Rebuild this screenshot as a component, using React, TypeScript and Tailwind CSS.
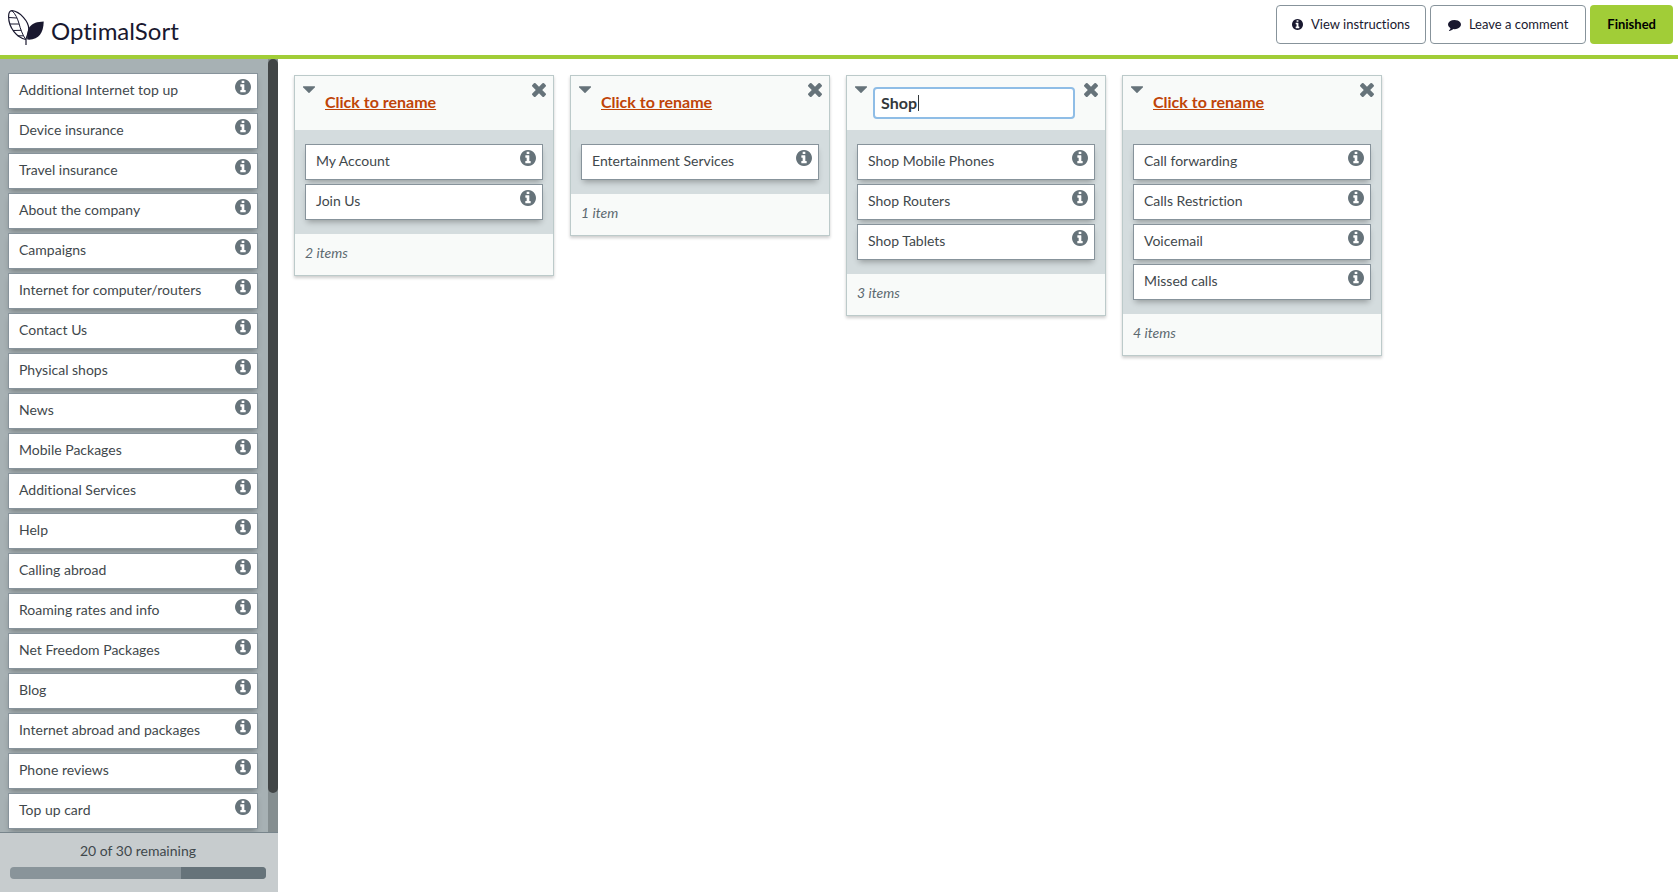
import { useState } from "react";

const REMAINING = [
  "Additional Internet top up",
  "Device insurance",
  "Travel insurance",
  "About the company",
  "Campaigns",
  "Internet for computer/routers",
  "Contact Us",
  "Physical shops",
  "News",
  "Mobile Packages",
  "Additional Services",
  "Help",
  "Calling abroad",
  "Roaming rates and info",
  "Net Freedom Packages",
  "Blog",
  "Internet abroad and packages",
  "Phone reviews",
  "Top up card",
];

const TOTAL_CARDS = 30;
const SORTED_CARDS = 10;

type Group = { id: number; name: string | null; cards: string[] };

const GROUPS: Group[] = [
  { id: 1, name: null, cards: ["My Account", "Join Us"] },
  { id: 2, name: null, cards: ["Entertainment Services"] },
  { id: 3, name: "Shop", cards: ["Shop Mobile Phones", "Shop Routers", "Shop Tablets"] },
  { id: 4, name: null, cards: ["Call forwarding", "Calls Restriction", "Voicemail", "Missed calls"] },
];

function InfoIcon({ className }: { className: string }) {
  return (
    <svg viewBox="128 128 1536 1536" fill="currentColor" aria-hidden="true" className={className}>
      <path d="M1152 1376v-160q0-14-9-23t-23-9h-96v-512q0-14-9-23t-23-9h-320q-14 0-23 9t-9 23v160q0 14 9 23t23 9h96v320h-96q-14 0-23 9t-9 23v160q0 14 9 23t23 9h448q14 0 23-9t9-23zm-128-896v-160q0-14-9-23t-23-9h-192q-14 0-23 9t-9 23v160q0 14 9 23t23 9h192q14 0 23-9t9-23zm640 416q0 209-103 385.5t-279.5 279.5-385.5 103-385.5-103-279.5-279.5-103-385.5 103-385.5 279.5-279.5 385.5-103 385.5 103 279.5 279.5 103 385.5z" />
    </svg>
  );
}

function CommentIcon({ className }: { className: string }) {
  return (
    <svg viewBox="0 128 1792 1664" fill="currentColor" aria-hidden="true" className={className}>
      <path d="M1792 896q0 174-120 321.5t-326 233-450 85.5q-70 0-145-8-198 175-460 242-49 14-114 22-17 2-30.5-9t-17.5-29v-1q-3-4-.5-12t2-10 4.5-9.5l6-9 7-8.5 8-9q7-8 31-34.5t34.5-38 31-39.5 32.5-51 27-59 26-76q-157-89-247.5-220t-90.5-281q0-130 71-248.5t191-204.5 286-136.5 348-50.5q244 0 450 85.5t326 233 120 321.5z" />
    </svg>
  );
}

function CloseIcon({ className }: { className: string }) {
  return (
    <svg viewBox="302 344 1188 1188" fill="currentColor" aria-hidden="true" className={className}>
      <path d="M1490 1300q0 40-28 68l-136 136q-28 28-68 28t-68-28l-294-294-294 294q-28 28-68 28t-68-28l-136-136q-28-28-28-68t28-68l294-294-294-294q-28-28-28-68t28-68l136-136q28-28 68-28t68 28l294 294 294-294q28-28 68-28t68 28l136 136q28 28 28 68t-28 68l-294 294 294 294q28 28 28 68z" />
    </svg>
  );
}

function CaretIcon({ className }: { className: string }) {
  return (
    <svg viewBox="384 640 1024 576" fill="currentColor" aria-hidden="true" className={className}>
      <path d="M1408 704q0 26-19 45l-448 448q-19 19-45 19t-45-19l-448-448q-19-19-19-45t19-45 45-19h896q26 0 45 19t19 45z" />
    </svg>
  );
}

function Logo() {
  return (
    <div className="flex items-start text-[#19182f]">
      <svg viewBox="0 0 36 36" fill="none" stroke="currentColor" aria-hidden="true" className="h-9 w-9">
        {/* outlined leaf */}
        <path
          d="M17.8 29.5C9 27.5 0.600 18 0.600 6.500C0.600 3 1.800 0.800 4 0.700C12 1.500 20.800 11.500 20.800 19C20.800 23 18.700 25.500 18 29.500V35"
          strokeWidth="1.200"
          strokeLinejoin="round"
        />
        {/* veins */}
        <path
          d="M4 0.700C7.500 4 9.500 8.500 11 13.500C12.500 19 14.500 25 17.800 29.500M0.800 7.500L8.800 8M2 14L11.200 14M5 20.500L13.200 20.300M9.500 25.800L15.500 25.800"
          strokeWidth="1"
        />
        {/* solid leaf */}
        <path
          d="M19.200 29.600C18.500 17.500 22.500 12 35.700 11.500C35.500 23 30.500 30.500 19.200 29.600Z"
          fill="currentColor"
          stroke="none"
        />
      </svg>
      <span className="pt-[7px] pl-[7px] text-2xl leading-7">OptimalSort</span>
    </div>
  );
}

function Card({ label }: { label: string }) {
  return (
    <li className="flex h-9 items-start justify-between border border-[#87939b] bg-white pt-1 pr-1.5 pl-2.5 text-sm leading-6 text-[#3f484c] shadow-[0_4px_6px_-2px_rgba(0,0,0,0.3)]">
      <span>{label}</span>
      <button type="button" aria-label={`About ${label}`} className="pt-px text-[#66737a]">
        <InfoIcon className="h-4 w-4" />
      </button>
    </li>
  );
}

function Sidebar() {
  const sortedShare = (SORTED_CARDS / TOTAL_CARDS) * 100;

  return (
    <aside className="flex w-[278px] shrink-0 flex-col">
      <div className="flex min-h-0 flex-1 bg-[#a7b1b4]">
        <ul className="flex min-w-0 flex-1 flex-col gap-1 overflow-hidden pt-3.5 pr-2.5 pl-2">
          {REMAINING.map((label) => (
            <Card key={label} label={label} />
          ))}
        </ul>
        {/* Scrollbar */}
        <div className="w-2.5 bg-[#858e90]">
          <div className="h-[95%] rounded-full bg-[#414546]" />
        </div>
      </div>

      <div className="border-t border-[#78858c] bg-[#c7ccce] pt-1.5 pr-3 pb-[13px] pl-2.5 text-center">
        <p className="text-sm leading-6 text-[#3f484c]">
          {TOTAL_CARDS - SORTED_CARDS} of {TOTAL_CARDS} remaining
        </p>
        <div className="mt-1 flex h-3 justify-end overflow-hidden rounded-sm bg-[#89949a]">
          <div className="bg-[#66737a]" style={{ width: `${sortedShare}%` }} />
        </div>
      </div>
    </aside>
  );
}

function GroupPanel({ group }: { group: Group }) {
  const [name, setName] = useState(group.name ?? "");
  const [typing, setTyping] = useState(false);
  const count = group.cards.length;

  return (
    <section className="w-[260px] border border-[#bccaca] bg-[#f8faf9] shadow-[0_2px_3px_rgba(0,0,0,0.2)]">
      <header className="flex h-[54px] items-start justify-between pr-[7px] pl-2">
        <button type="button" aria-label="Collapse group" className="pt-2.5 text-[#66737a]">
          <CaretIcon className="h-[7px] w-3" />
        </button>
        {group.name === null ? (
          <div className="flex-1 pt-3.5 pl-2.5">
            <a href="#rename" className="text-base leading-6 font-bold text-[#bf4408] underline">
              Click to rename
            </a>
          </div>
        ) : (
          <div className="relative mt-[11px] mr-[9px] ml-1.5 flex-1">
            <input
              aria-label="Group name"
              value={name}
              onFocus={() => setTyping(true)}
              onChange={(e) => setName(e.target.value)}
              className="block h-8 w-full rounded-sm border-2 border-[#8fbde6] bg-white px-1.5 pb-0.5 text-base leading-6 font-bold text-[#33383b] outline-none"
            />
            {/* resting caret until the field takes focus */}
            {!typing && <span className="absolute top-2 left-[45px] h-4 w-px bg-[#33383b]" />}
          </div>
        )}
        <button type="button" aria-label="Remove group" className="pt-[7px] text-[#66737a]">
          <CloseIcon className="h-3.5 w-3.5" />
        </button>
      </header>

      <ul className="flex flex-col gap-1 bg-[#d4dcde] px-2.5 py-3.5">
        {group.cards.map((label) => (
          <Card key={label} label={label} />
        ))}
      </ul>

      <footer className="px-2.5 pt-[7px] pb-2.5 text-sm leading-6 text-[#5c6970] italic">
        {count} {count === 1 ? "item" : "items"}
      </footer>
    </section>
  );
}

export default function App() {
  return (
    <div className="flex h-screen flex-col bg-white font-['Lato',sans-serif] [font-variant-ligatures:none]">
      <header className="flex h-[59px] shrink-0 items-start justify-between border-b-4 border-[#a1cd37] pr-[5px] pl-2">
        <div className="pt-2.5">
          <Logo />
        </div>
        <div className="flex gap-1 pt-[5px] text-[13px] text-[#19182f]">
          <button type="button" className="flex h-[39px] items-center gap-2 rounded-sm border border-[#87939b] px-[15px]">
            <InfoIcon className="h-[11px] w-[11px]" />
            View instructions
          </button>
          <button type="button" className="flex h-[39px] items-center gap-2 rounded-sm border border-[#87939b] px-[17px]">
            <CommentIcon className="h-3 w-[13px]" />
            Leave a comment
          </button>
          <button type="button" className="h-[39px] rounded-sm bg-[#a1cd37] px-[17px] font-bold text-black">
            Finished
          </button>
        </div>
      </header>

      <div className="flex min-h-0 flex-1">
        <Sidebar />
        <main className="flex flex-1 flex-wrap content-start items-start gap-4 overflow-auto p-4">
          {GROUPS.map((group) => (
            <GroupPanel key={group.id} group={group} />
          ))}
        </main>
      </div>
    </div>
  );
}
